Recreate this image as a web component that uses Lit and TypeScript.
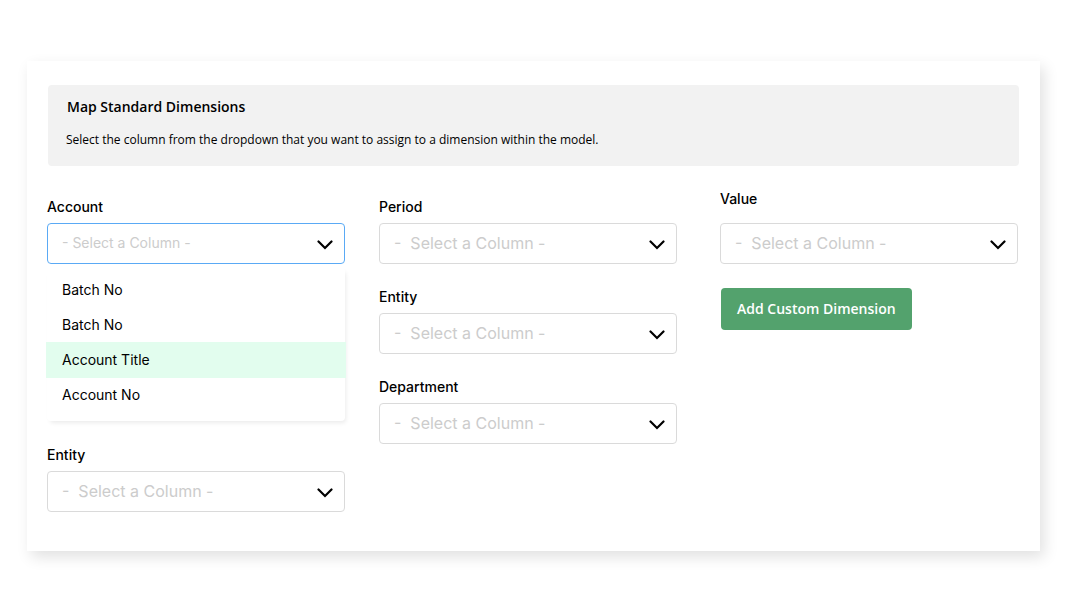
import { LitElement, html, css } from "lit";
import { customElement, property } from "lit/decorators.js";
import { classMap } from "lit/directives/class-map.js";

const COLUMNS = ["Batch No", "Batch No", "Account Title", "Account No"];

@customElement("dimension-field")
class DimensionField extends LitElement {
  @property() label = "";
  @property({ type: Boolean, reflect: true }) open = false;
  @property({ type: Boolean, reflect: true }) spaced = false;
  @property({ type: Number }) active = -1;

  static styles = css`
    :host {
      display: block;
      font-family: Inter, "Open Sans", sans-serif;
      color: #000;
    }
    .label {
      display: block;
      margin-bottom: 6px;
      font-size: 14px;
      font-weight: 500;
      line-height: 20px;
    }
    :host([spaced]) .label {
      margin-bottom: 14px;
    }
    .control {
      display: grid;
      align-items: center;
    }
    .select {
      grid-area: 1 / 1;
      appearance: none;
      box-sizing: border-box;
      width: 100%;
      height: 41px;
      margin: 0;
      padding: 0 40px 2px 14px;
      border: 1px solid #dadada;
      border-radius: 4px;
      background: #fff;
      color: #ccc;
      font-family: inherit;
      font-size: 16px;
      font-weight: 400;
      outline: none;
    }
    .select.open {
      border-color: #5aaaf5;
      font-size: 14px;
    }
    .chevron {
      grid-area: 1 / 1;
      justify-self: end;
      width: 16px;
      height: 10px;
      margin: 2px 12px 0 0;
      pointer-events: none;
    }
    .menu {
      margin: 4px 0 0;
      padding: 4px 0 9px;
      border-radius: 4px;
      background: #fff;
      box-shadow: 2px 3px 4px -1px rgba(0, 0, 0, 0.08);
      list-style: none;
    }
    .option {
      padding: 0 15px;
      font-size: 14px;
      line-height: 35px;
    }
    .option.active {
      margin: 0 -1px;
      padding: 0 16px;
      background: #e2fdee;
      box-shadow: 0 1px 0 #e2fdee;
    }
  `;

  render() {
    const prompt = this.open ? "- Select a Column -" : "-\u00a0 Select a Column -";
    return html`
      <label class="label" for="column">${this.label}</label>
      <div class="control">
        <select id="column" class=${classMap({ select: true, open: this.open })}>
          <option>${prompt}</option>
          ${COLUMNS.map((name) => html`<option>${name}</option>`)}
        </select>
        <svg class="chevron" viewBox="0 0 16 10" aria-hidden="true">
          <path d="M1.5 1.5L8 8L14.5 1.5" fill="none" stroke="#000" stroke-width="2.2" stroke-linecap="round" stroke-linejoin="miter" />
        </svg>
      </div>
      ${this.open
        ? html`<ul class="menu" role="listbox" aria-label=${this.label}>
            ${COLUMNS.map(
              (name, i) => html`<li
                class=${classMap({ option: true, active: i === this.active })}
                role="option"
                aria-selected=${i === this.active}
              >${name}</li>`
            )}
          </ul>`
        : null}
    `;
  }
}

@customElement("app-root")
class AppRoot extends LitElement {
  static styles = css`
    :host {
      display: block;
      box-sizing: border-box;
      padding: 61px 26px 61px 27px;
      background: #fff;
      font-family: "Open Sans", sans-serif;
      color: #000;
    }
    .card {
      padding: 24px 0 39px;
      background: #fff;
      box-shadow: 4px 6px 14px rgba(0, 0, 0, 0.12);
    }
    .banner {
      margin: 0 21px;
      padding: 12px 18px 16px;
      border-radius: 4px;
      background: #f2f2f2;
    }
    .title {
      margin: 0 0 13px 1px;
      font-size: 14px;
      font-weight: 600;
      line-height: 20px;
    }
    .text {
      margin: 0;
      font-size: 12px;
      line-height: 20px;
    }
    .columns {
      display: flex;
      gap: 34px;
      padding: 31px 22px 0 20px;
    }
    .column {
      display: flex;
      flex: 1;
      flex-direction: column;
      gap: 24px;
      min-width: 0;
    }
    .column.middle {
      gap: 23px;
    }
    .column.last {
      margin: -8px 0 0 9px;
    }
    .add {
      align-self: flex-start;
      height: 42px;
      margin: 0 1px;
      padding: 0 16px;
      border: 0;
      border-radius: 4px;
      background: #53a26d;
      color: #fff;
      font-family: inherit;
      font-size: 14px;
      font-weight: 600;
      line-height: 20px;
    }
  `;

  render() {
    return html`
      <main class="card">
        <header class="banner">
          <h1 class="title">Map Standard Dimensions</h1>
          <p class="text">Select the column from the dropdown that you want to assign to a dimension within the model.</p>
        </header>
        <div class="columns">
          <div class="column">
            <dimension-field label="Account" open .active=${2}></dimension-field>
            <dimension-field label="Entity"></dimension-field>
          </div>
          <div class="column middle">
            <dimension-field label="Period"></dimension-field>
            <dimension-field label="Entity"></dimension-field>
            <dimension-field label="Department"></dimension-field>
          </div>
          <div class="column last">
            <dimension-field label="Value" spaced></dimension-field>
            <button class="add" type="button">Add Custom Dimension</button>
          </div>
        </div>
      </main>
    `;
  }
}
